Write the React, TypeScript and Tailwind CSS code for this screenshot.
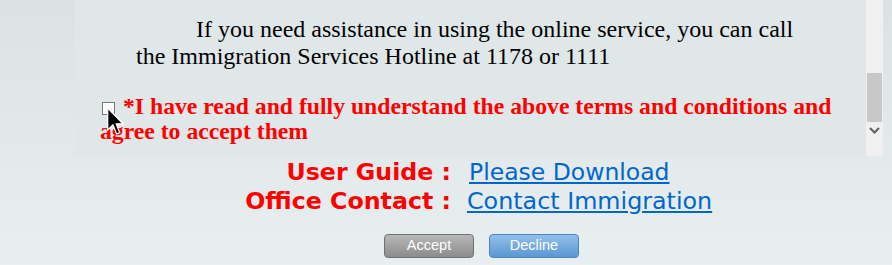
import React from 'react';

const serif = { fontFamily: '"Liberation Serif", "Times New Roman", serif' };
const verdana = { fontFamily: '"DejaVu Sans", Verdana, sans-serif' };

const Cursor = () => (
  <svg
    className="absolute left-[107px] top-[107px]"
    width="17"
    height="29"
    viewBox="0 0 12 20"
  >
    <path
      d="M0.5 0.5 L0.5 16 L4.2 12.4 L6.8 18.8 L9 17.9 L6.5 11.6 L11.3 11.6 Z"
      fill="#000"
      stroke="#fff"
      strokeWidth="0.9"
      strokeLinejoin="miter"
    />
  </svg>
);

export default function App() {
  return (
    <div className="relative h-[265px] w-[892px] overflow-hidden bg-gradient-to-b from-[#dae2e4] to-[#e8eff0]">
      {/* terms box (scrolled) */}
      <div className="ml-[75px] flex h-[156px] w-[808px] bg-[#e0e7e8]">
        <div className="flex-1 overflow-hidden">
          <p
            className="pl-[61px] pr-[10px] pt-[16px] indent-[60px] text-[24px] leading-[27px] text-black"
            style={serif}
          >
            If you need assistance in using the online service, you can call
            <br />
            the Immigration Services Hotline at 1178 or 1111
          </p>
          <p
            className="mt-[24px] pl-[25px] pr-[4px] text-[23.7px] font-bold leading-[25px] text-[#ff0000]"
            style={serif}
          >
            <span className="relative top-[1px] ml-[2px] mr-[8px] inline-block h-[13px] w-[13px] border border-[#777] bg-white align-baseline" />
            *I have read and fully understand the above terms and conditions and agree to accept them
          </p>
        </div>
        {/* scrollbar */}
        <div className="flex w-[17px] flex-col bg-[#f0f0f0]">
          <div className="h-[73px]" />
          <div className="mx-[1px] h-[49px] bg-[#c8c8c8]" />
          <div className="flex h-[17px] items-center justify-center">
            <svg width="11" height="7" viewBox="0 0 11 7">
              <path d="M1 1 L5.5 5.5 L10 1" fill="none" stroke="#606060" strokeWidth="2" />
            </svg>
          </div>
        </div>
      </div>

      {/* guide / contact */}
      <div className="mt-[2px] grid grid-cols-[451px_1fr] text-[23.7px] leading-[29px]" style={verdana}>
        <div className="text-right font-bold text-[#ff0000]">User Guide :</div>
        <div className="pl-[18px]">
          <a className="text-[23.5px] text-[#0066cc] underline">Please Download</a>
        </div>
        <div className="text-right font-bold text-[#ff0000]">Office Contact :</div>
        <div className="pl-[16px]">
          <a className="text-[23.8px] text-[#0066cc] underline">Contact Immigration</a>
        </div>
      </div>

      {/* buttons */}
      <div className="mt-[18px] flex gap-[15px] pl-[384px]" style={{ fontFamily: '"Liberation Sans", Arial, sans-serif' }}>
        <button className="h-[24px] w-[90px] rounded-[4px] border border-[#707070] bg-gradient-to-b from-[#b8b8b8] to-[#8c8c8c] text-[14.5px] text-white">
          Accept
        </button>
        <button className="h-[24px] w-[90px] rounded-[4px] border border-[#4d85c0] bg-gradient-to-b from-[#92c0ea] to-[#5c96d1] text-[14.5px] text-white">
          Decline
        </button>
      </div>

      <Cursor />
    </div>
  );
}
